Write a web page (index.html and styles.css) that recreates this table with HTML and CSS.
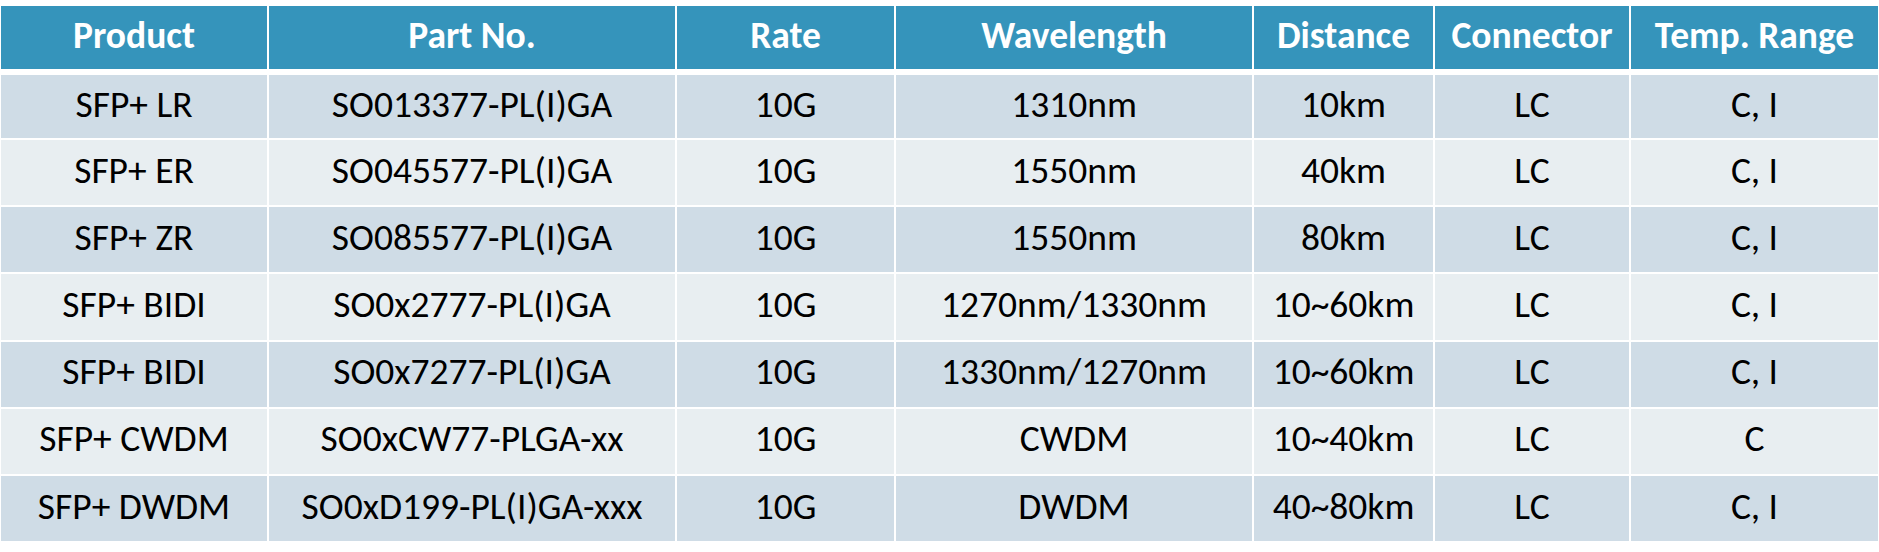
FILE: index.html
```html
<!DOCTYPE html>
<html lang="en">
<head>
<meta charset="utf-8">
<title>SFP+ Products</title>
<link rel="stylesheet" href="styles.css">
</head>
<body>
<div class="table">
  <div class="grid head">
    <div class="cell">Product</div>
    <div class="cell">Part No.</div>
    <div class="cell">Rate</div>
    <div class="cell">Wavelength</div>
    <div class="cell">Distance</div>
    <div class="cell">Connector</div>
    <div class="cell">Temp. Range</div>
  </div>
  <div class="grid body">
    <div class="cell odd">SFP+ LR</div>
    <div class="cell odd">SO013377-PL(I)GA</div>
    <div class="cell odd">10G</div>
    <div class="cell odd">1310nm</div>
    <div class="cell odd">10km</div>
    <div class="cell odd">LC</div>
    <div class="cell odd">C, I</div>

    <div class="cell even">SFP+ ER</div>
    <div class="cell even">SO045577-PL(I)GA</div>
    <div class="cell even">10G</div>
    <div class="cell even">1550nm</div>
    <div class="cell even">40km</div>
    <div class="cell even">LC</div>
    <div class="cell even">C, I</div>

    <div class="cell odd">SFP+ ZR</div>
    <div class="cell odd">SO085577-PL(I)GA</div>
    <div class="cell odd">10G</div>
    <div class="cell odd">1550nm</div>
    <div class="cell odd">80km</div>
    <div class="cell odd">LC</div>
    <div class="cell odd">C, I</div>

    <div class="cell even">SFP+ BIDI</div>
    <div class="cell even">SO0x2777-PL(I)GA</div>
    <div class="cell even">10G</div>
    <div class="cell even">1270nm/1330nm</div>
    <div class="cell even">10~60km</div>
    <div class="cell even">LC</div>
    <div class="cell even">C, I</div>

    <div class="cell odd">SFP+ BIDI</div>
    <div class="cell odd">SO0x7277-PL(I)GA</div>
    <div class="cell odd">10G</div>
    <div class="cell odd">1330nm/1270nm</div>
    <div class="cell odd">10~60km</div>
    <div class="cell odd">LC</div>
    <div class="cell odd">C, I</div>

    <div class="cell even">SFP+ CWDM</div>
    <div class="cell even">SO0xCW77-PLGA-xx</div>
    <div class="cell even">10G</div>
    <div class="cell even">CWDM</div>
    <div class="cell even">10~40km</div>
    <div class="cell even">LC</div>
    <div class="cell even">C</div>

    <div class="cell odd">SFP+ DWDM</div>
    <div class="cell odd">SO0xD199-PL(I)GA-xxx</div>
    <div class="cell odd">10G</div>
    <div class="cell odd">DWDM</div>
    <div class="cell odd">40~80km</div>
    <div class="cell odd">LC</div>
    <div class="cell odd">C, I</div>
  </div>
</div>
</body>
</html>
```
FILE: styles.css
```css
html, body {
  margin: 0;
  padding: 0;
  background: #ffffff;
}

body {
  padding: 6px 0 0 1px;
  font-family: Carlito, Calibri, Lato, "Liberation Sans", sans-serif;
  font-size: 37.5px;
  color: #000000;
}

.table {
  display: flex;
  flex-direction: column;
  gap: 6px;
  width: 1877px;
}

.grid {
  display: grid;
  grid-template-columns: 266px 406px 217px 356px 179px 194px 247px;
  column-gap: 2px;
  row-gap: 2px;
}

.head {
  grid-template-rows: 63px;
}

.body {
  grid-template-rows: 63px repeat(6, 65.2px);
}

.cell {
  display: flex;
  align-items: center;
  justify-content: center;
  padding-bottom: 6px;
  box-sizing: border-box;
  white-space: nowrap;
}

.head .cell {
  background: #3594bb;
  color: #ffffff;
  font-weight: 700;
}

.odd {
  background: #cfdce6;
}

.even {
  background: #e8eef1;
}
```
